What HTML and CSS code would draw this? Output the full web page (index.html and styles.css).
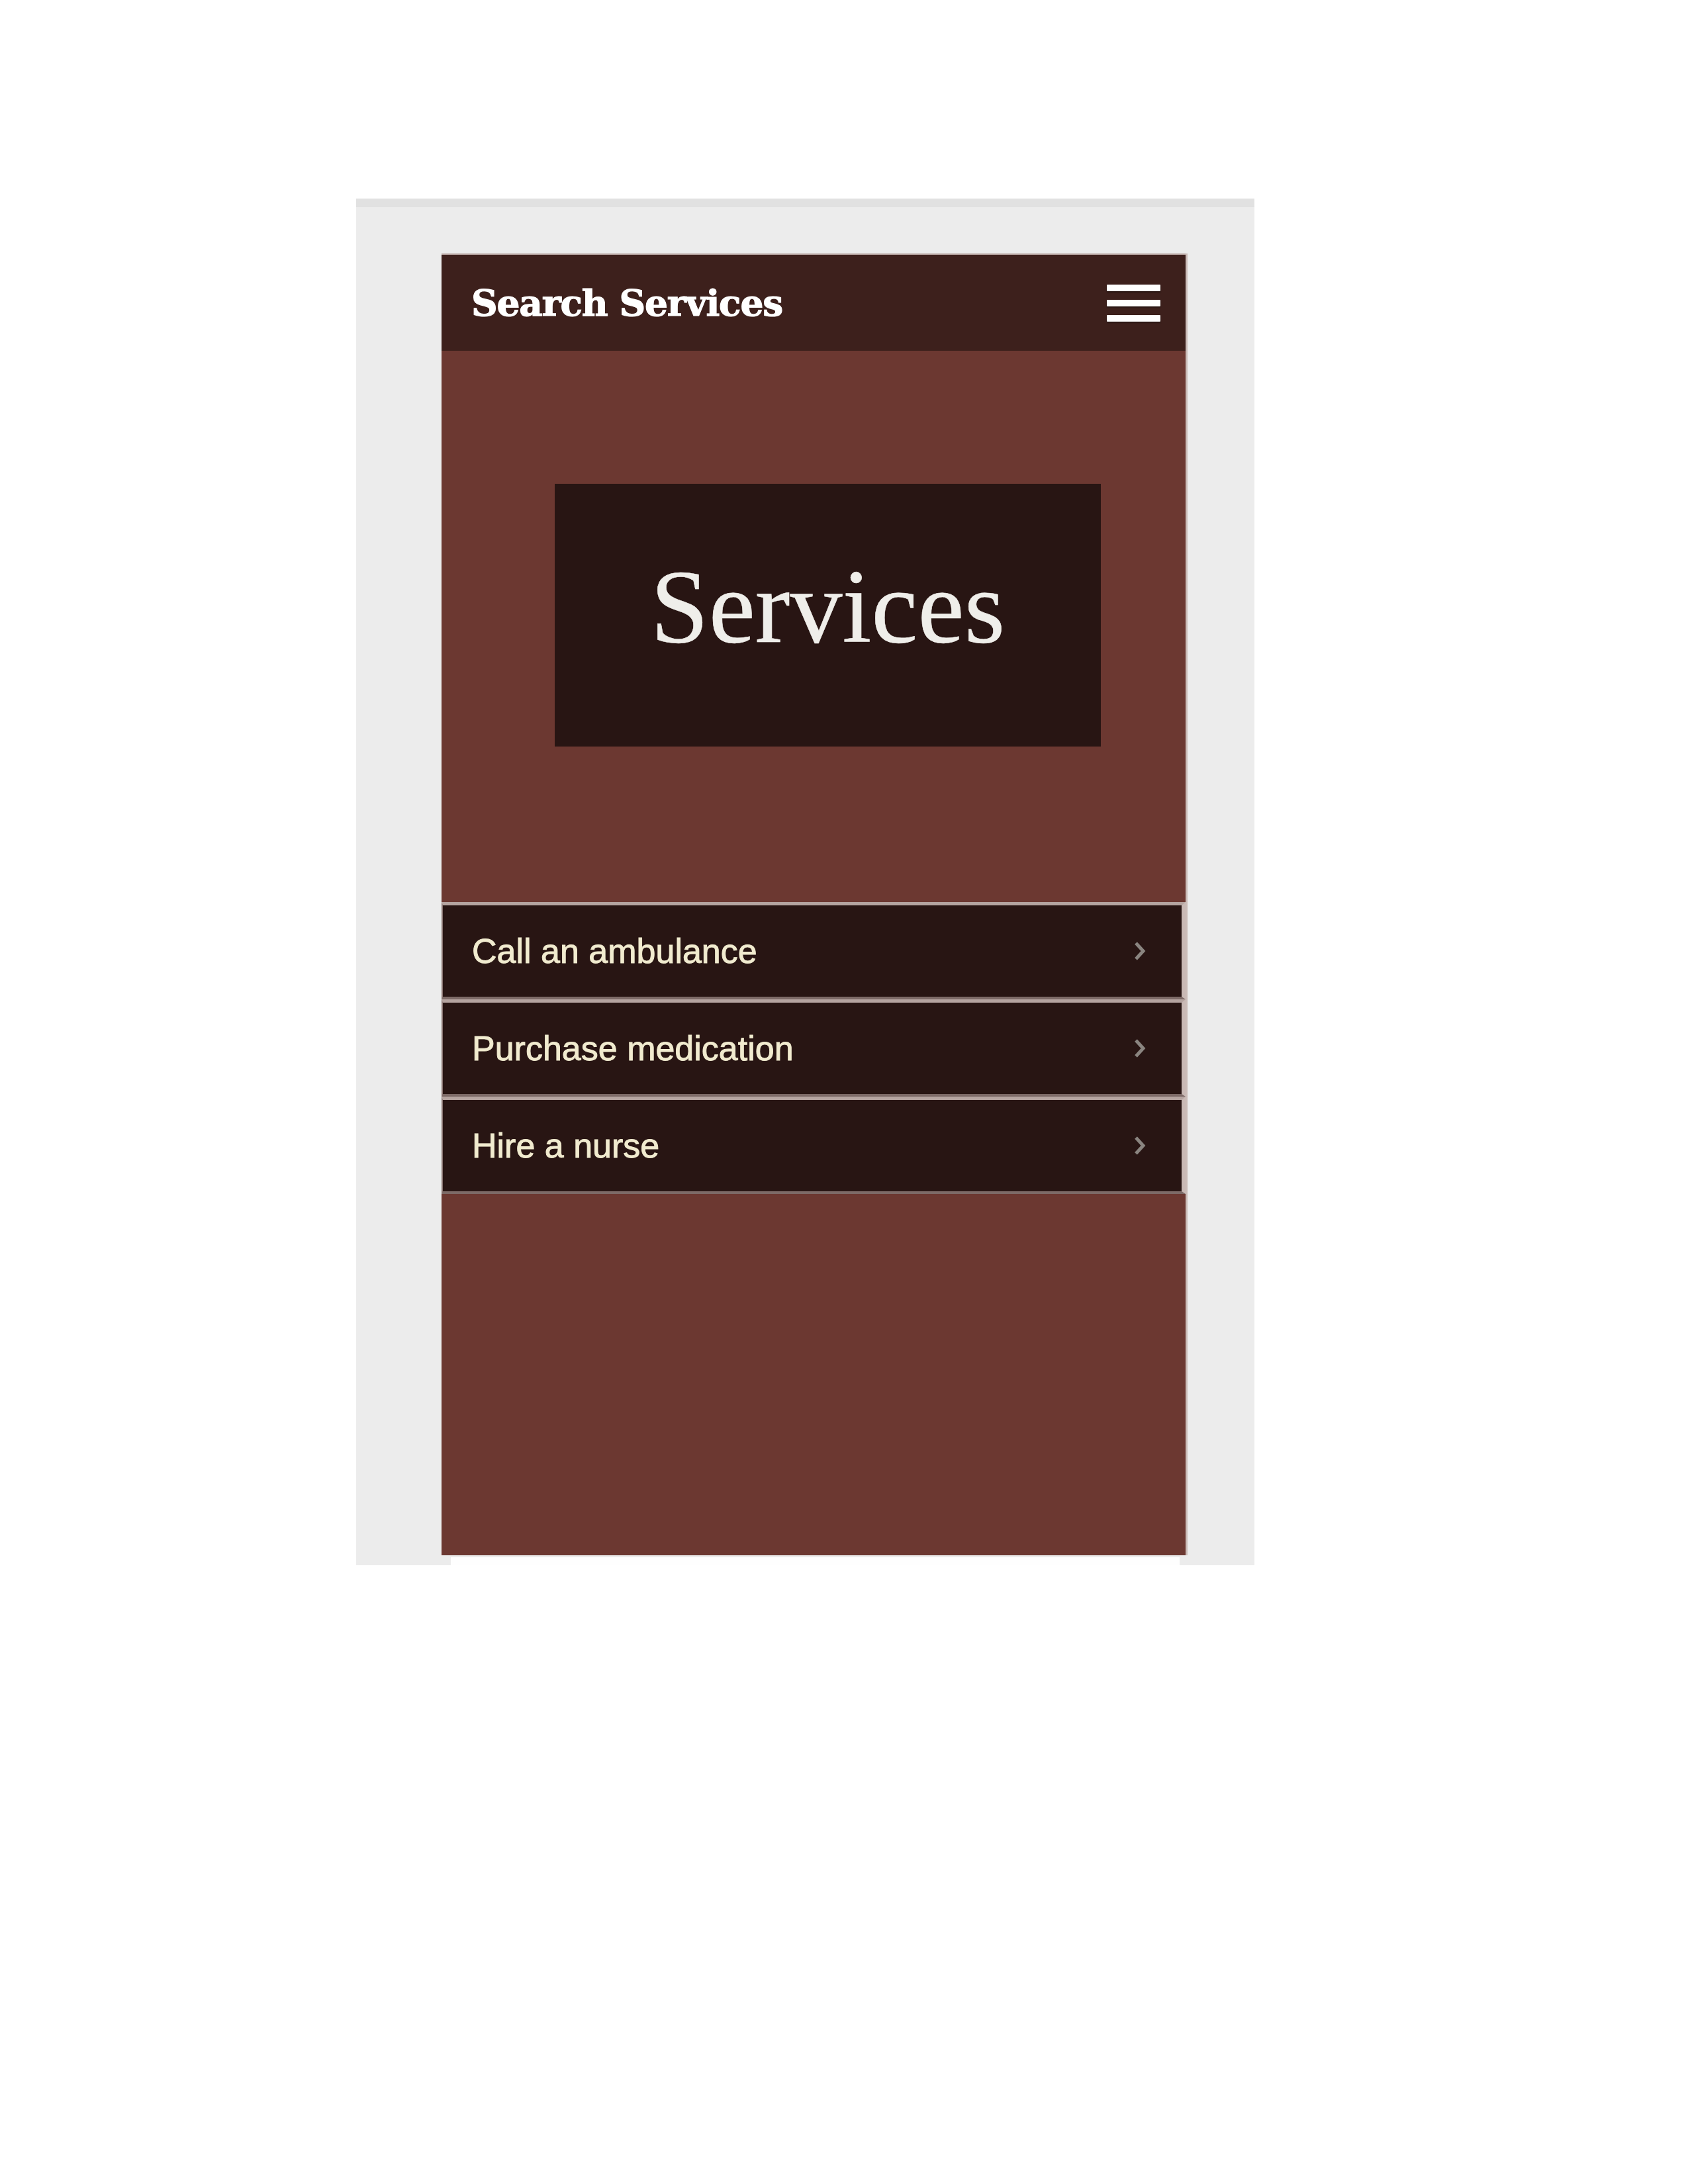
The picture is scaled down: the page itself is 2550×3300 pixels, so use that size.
FILE: index.html
```html
<!DOCTYPE html>
<html lang="en">
<head>
<meta charset="utf-8">
<title>Search Services</title>
<link rel="stylesheet" href="styles.css">
</head>
<body>
<div class="frame">
  <div class="phone">
    <header class="topbar">
      <h1 class="brand">Search Services</h1>
      <button class="menu" aria-label="Menu"><span></span><span></span><span></span></button>
    </header>
    <section class="hero">
      <div class="hero-box"><h2>Services</h2></div>
    </section>
    <ul class="list">
      <li class="row"><span>Call an ambulance</span><svg class="chev" viewBox="0 0 20 30"><path d="M4 3 L15 15 L4 27" fill="none" stroke="#8a8580" stroke-width="5"/></svg></li>
      <li class="row"><span>Purchase medication</span><svg class="chev" viewBox="0 0 20 30"><path d="M4 3 L15 15 L4 27" fill="none" stroke="#8a8580" stroke-width="5"/></svg></li>
      <li class="row"><span>Hire a nurse</span><svg class="chev" viewBox="0 0 20 30"><path d="M4 3 L15 15 L4 27" fill="none" stroke="#8a8580" stroke-width="5"/></svg></li>
    </ul>
    <div class="filler"></div>
  </div>
  <div class="notch"></div>
</div>
</body>
</html>
```
FILE: styles.css
```css
html, body {
  margin: 0;
  padding: 0;
  background: #ffffff;
}
.frame {
  margin: 300px 0 0 538px;
  width: 1357px;
  height: 2065px;
  box-sizing: border-box;
  background: #ececec;
  border-top: 13px solid #e1e1e1;
  padding: 70px 0 0 129px;
  display: flex;
  flex-direction: column;
}
.phone {
  width: 1124px;
  height: 1967px;
  background: #6c3831;
  display: flex;
  flex-direction: column;
  box-shadow: 3px 0 0 #cbbcb8;
}
.topbar {
  height: 147px;
  flex: none;
  background: #3d201c;
  border-top: 2px solid #b9a7a3;
  box-sizing: border-box;
  display: flex;
  align-items: center;
  justify-content: space-between;
  padding: 0 38px 0 44px;
}
.brand {
  margin: 0;
  font-family: "DejaVu Serif", serif;
  font-weight: bold;
  font-size: 55px;
  letter-spacing: -1.2px;
  color: #ffffff;
  line-height: 1;
  -webkit-text-stroke: 1.2px #ffffff;
  padding-left: 1px;
}
.menu {
  width: 81px;
  height: 56px;
  padding: 0;
  border: 0;
  background: none;
  display: flex;
  flex-direction: column;
  justify-content: space-between;
}
.menu span {
  display: block;
  height: 10px;
  width: 81px;
  background: #ffffff;
  box-shadow: 0 2px 2px rgba(0,0,0,0.35);
  border-radius: 1px;
}
.hero {
  height: 833px;
  flex: none;
  box-sizing: border-box;
  padding: 201px 0 0 171px;
}
.hero-box {
  width: 825px;
  height: 397px;
  background: #281513;
  display: flex;
  justify-content: center;
  align-items: center;
  padding-bottom: 26px;
  box-sizing: border-box;
}
.hero-box h2 {
  margin: 0;
  font-family: "Liberation Serif", serif;
  font-weight: normal;
  font-size: 158px;
  line-height: 1;
  color: #efeeea;
  -webkit-text-stroke: 0.6px #efeeea;
}
.list {
  list-style: none;
  margin: 0;
  padding: 0;
}
.row {
  height: 147px;
  box-sizing: border-box;
  background: #281513;
  border-top: 5px solid #b5a4a0;
  border-bottom: 4px solid #7d6a67;
  border-left: 2px solid #8a7572;
  border-right: 6px solid #c9b9b5;
  display: flex;
  align-items: center;
  justify-content: space-between;
  padding: 0 53px 0 44px;
  font-family: "Liberation Sans", Arial, sans-serif;
  font-size: 52px;
  color: #f1ebcf;
  -webkit-text-stroke: 0.9px #f1ebcf;
}
.chev {
  width: 20px;
  height: 30px;
}
.filler {
  flex: 1;
}
.notch {
  align-self: flex-start;
  margin: 3px 0 0 14px;
  width: 1101px;
  height: 12px;
  background: #fefefe;
}
```
